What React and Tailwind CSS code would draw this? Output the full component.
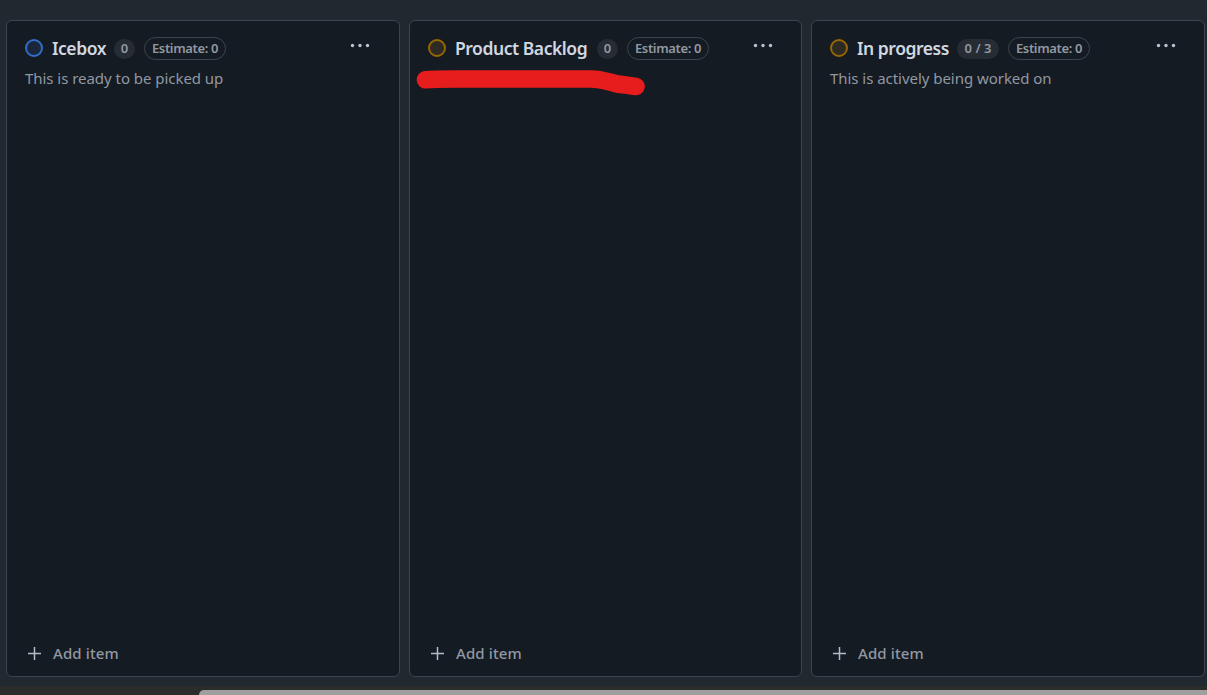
const columns = [
  {
    name: 'Icebox',
    count: '0',
    note: 'This is ready to be picked up',
    width: 'w-[394px]',
    titleWidth: 'w-[54px]',
    countWidth: 'w-[21px]',
    dotsInset: 'mr-[29px]',
    dot: 'border-[#316dca] bg-[#1a273a]',
  },
  {
    name: 'Product Backlog',
    count: '0',
    note: '',
    width: 'w-[393px]',
    titleWidth: 'w-[134px]',
    countWidth: 'w-[21px]',
    dotsInset: 'mr-[28px]',
    dot: 'border-[#966600] bg-[#2d2a24]',
    marked: true,
  },
  {
    name: 'In progress',
    count: '0 / 3',
    note: 'This is actively being worked on',
    width: 'w-[394px]',
    titleWidth: 'w-[92px]',
    countWidth: 'w-[42px]',
    dotsInset: 'mr-[28px]',
    dot: 'border-[#966600] bg-[#2d2a24]',
  },
];

function MenuDots({ inset }) {
  return (
    <svg width="20" height="6" viewBox="0 0 20 6" fill="#b9c4d0" className={`mt-[22px] shrink-0 ${inset}`}>
      <circle cx="2.5" cy="2.5" r="1.7" />
      <circle cx="10" cy="2.5" r="1.7" />
      <circle cx="17.5" cy="2.5" r="1.7" />
    </svg>
  );
}

function Marker() {
  return (
    <svg width="232" height="30" viewBox="0 0 232 30" className="absolute left-[5px] top-[48px]">
      <path
        d="M10.5 10.8C16 10.2 24 10 40 10H176C186 10 192 12.5 200 14.5C207 15.8 213 16.3 221 17.5"
        fill="none"
        stroke="#e71c1c"
        strokeWidth="17.6"
        strokeLinecap="round"
        strokeLinejoin="round"
      />
    </svg>
  );
}

function Column({ column }) {
  return (
    <section
      className={`relative flex h-[657px] shrink-0 flex-col rounded-md border border-[#3d444d] bg-[#151b23] ${column.width}`}
    >
      <header className="flex h-[45px] items-start justify-between pl-[18px]">
        <div className="mt-4 flex h-[23px] items-center whitespace-nowrap">
          <span className={`mb-[2px] size-[18px] shrink-0 rounded-full border-2 ${column.dot}`} />
          <h2 className={`ml-[9px] text-[17.5px] leading-[23px] font-semibold tracking-[-0.45px] text-[#d1d7e0] ${column.titleWidth}`}>
            {column.name}
          </h2>
          <span
            className={`ml-2 flex h-5 items-center justify-center rounded-full bg-[#262c34] text-[13px] font-semibold text-[#9198a1] ${column.countWidth}`}
          >
            {column.count}
          </span>
          <span className="ml-[9px] flex h-[23px] w-[82px] items-center justify-center rounded-full border border-[#3d444d] pt-px text-[13px] font-semibold tracking-[-0.35px] text-[#9198a1]">
            Estimate: 0
          </span>
        </div>
        <MenuDots inset={column.dotsInset} />
      </header>
      <p className="h-6 pl-[18px] text-[15px] leading-6 tracking-[-0.04px] whitespace-nowrap text-[#9198a1]">{column.note}</p>
      <button className="mt-auto mb-[11px] flex h-6 items-center pl-[21px] text-[15px] font-medium tracking-[0.1px] text-[#9198a1]">
        <svg width="14" height="14" viewBox="0 0 14 14" className="mr-[11px]" fill="none" stroke="#b3bbc5" strokeWidth="1.5">
          <path d="M6.5 1V14M0 7.5H13" />
        </svg>
        Add item
      </button>
      {column.marked && <Marker />}
    </section>
  );
}

export default function App() {
  return (
    <div className="flex h-[695px] w-[1207px] flex-col overflow-hidden bg-[#212830] font-['Noto_Sans','Open_Sans',sans-serif]">
      <main className="flex h-[686px] shrink-0 gap-[9px] pt-5 pl-[6px]">
        {columns.map((column) => (
          <Column key={column.name} column={column} />
        ))}
      </main>
      <div className="h-[9px] bg-[#2c2c2c] pt-1 pl-[199px]">
        <div className="h-[5px] rounded-tl-[5px] bg-[#9f9f9f]" />
      </div>
    </div>
  );
}
